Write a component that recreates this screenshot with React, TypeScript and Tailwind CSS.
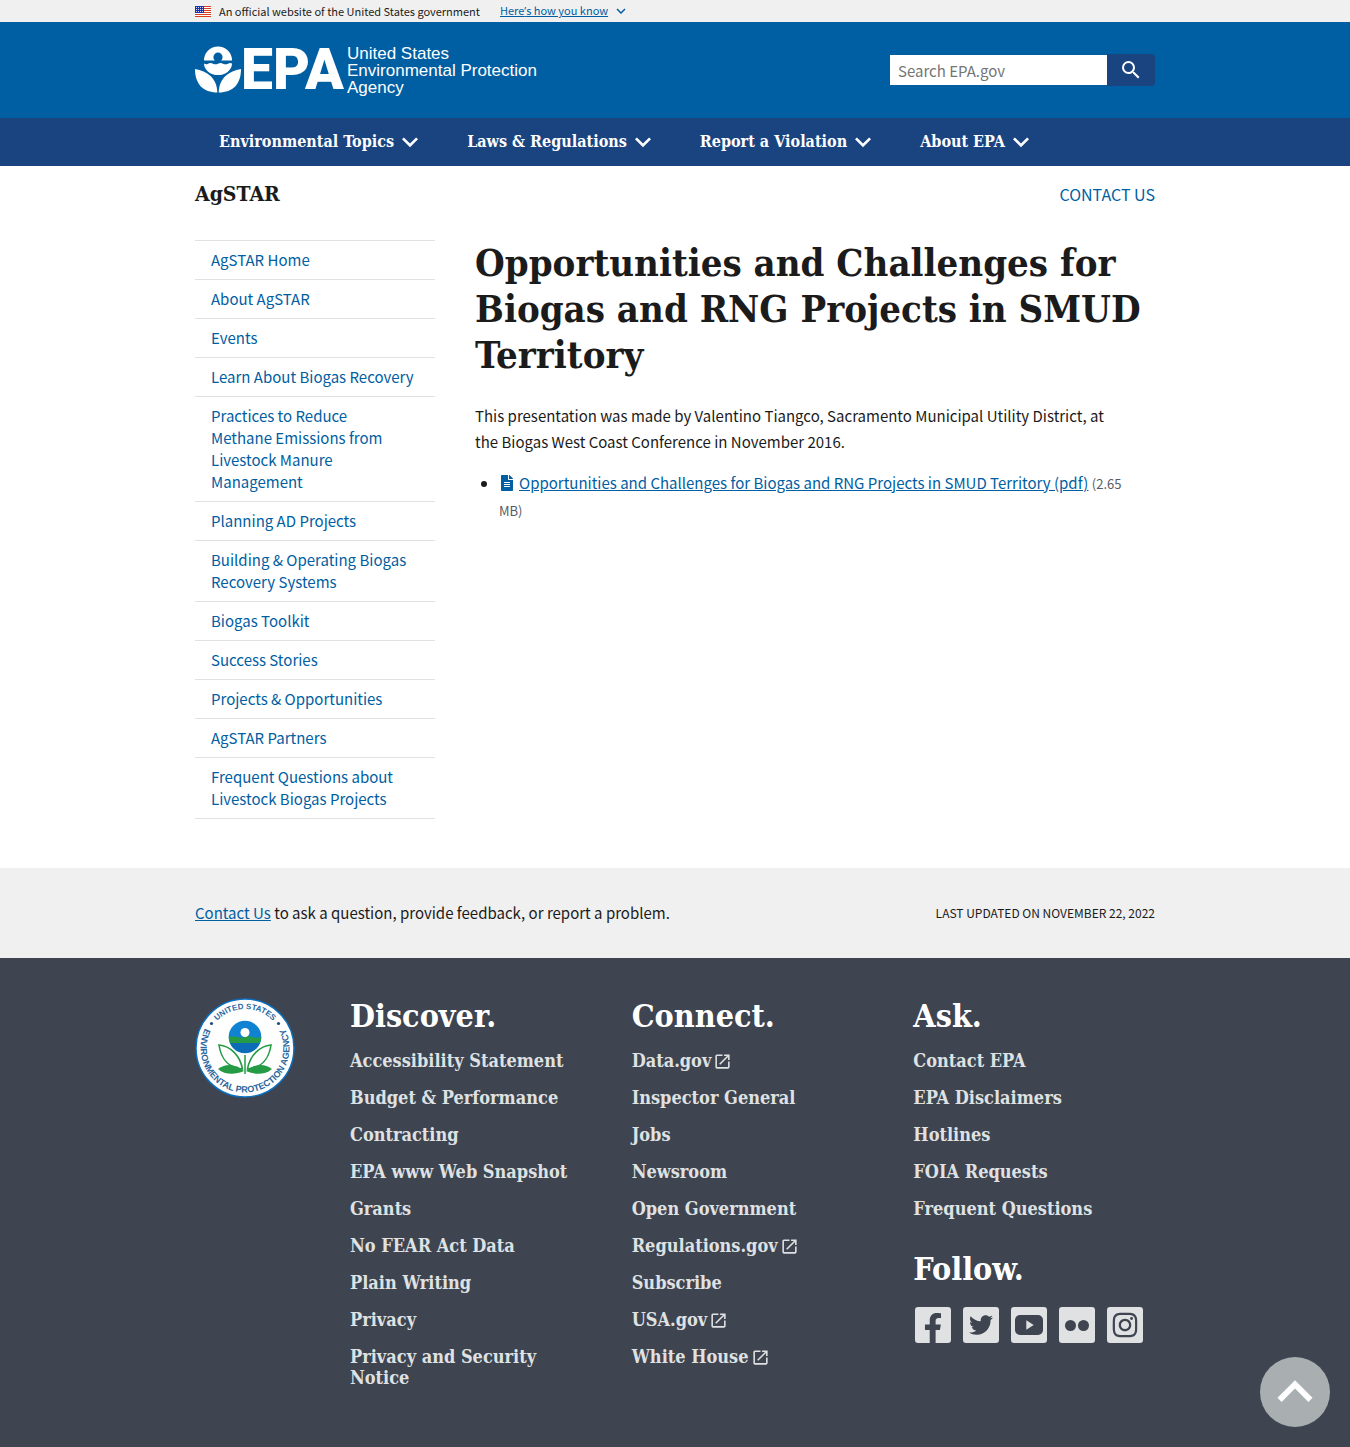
import type { ReactNode } from "react";
import { MdExpandLess, MdExpandMore, MdLaunch, MdPlayArrow, MdSearch } from "react-icons/md";
import { FaFacebookF, FaFileAlt, FaInstagram, FaTwitter } from "react-icons/fa";

const topics = ["Environmental Topics", "Laws & Regulations", "Report a Violation", "About EPA"];

const sideLinks = [
  "AgSTAR Home",
  "About AgSTAR",
  "Events",
  "Learn About Biogas Recovery",
  "Practices to Reduce Methane\u00a0Emissions from Livestock Manure Management",
  "Planning AD Projects",
  "Building & Operating Biogas Recovery Systems",
  "Biogas Toolkit",
  "Success Stories",
  "Projects & Opportunities",
  "AgSTAR Partners",
  "Frequent Questions about Livestock Biogas Projects",
];

type FooterLink = { label: string; external?: boolean };

const discover: FooterLink[] = [
  { label: "Accessibility Statement" },
  { label: "Budget & Performance" },
  { label: "Contracting" },
  { label: "EPA www Web Snapshot" },
  { label: "Grants" },
  { label: "No FEAR Act Data" },
  { label: "Plain Writing" },
  { label: "Privacy" },
  { label: "Privacy and Security Notice" },
];

const connect: FooterLink[] = [
  { label: "Data.gov", external: true },
  { label: "Inspector General" },
  { label: "Jobs" },
  { label: "Newsroom" },
  { label: "Open Government" },
  { label: "Regulations.gov", external: true },
  { label: "Subscribe" },
  { label: "USA.gov", external: true },
  { label: "White House", external: true },
];

const ask: FooterLink[] = [
  { label: "Contact EPA" },
  { label: "EPA Disclaimers" },
  { label: "Hotlines" },
  { label: "FOIA Requests" },
  { label: "Frequent Questions" },
];

function Container({ children, className = "" }: { children: ReactNode; className?: string }) {
  return <div className={`mx-auto w-full max-w-[960px] ${className}`}>{children}</div>;
}

function Flag() {
  return (
    <svg viewBox="0 0 16 11" className="h-[11px] w-4" aria-hidden="true">
      <rect width="16" height="11" fill="#fff" />
      {[0, 2, 4, 6, 8, 10].map((y) => (
        <rect key={y} y={y} width="16" height="1" fill="#db3e1f" />
      ))}
      <rect width="9" height="7" fill="#1e33b1" />
      {[1, 3, 5].map((y) =>
        [1, 3, 5, 7].map((x) => <rect key={`${x}-${y}`} x={x} y={y} width="1" height="1" fill="#fff" opacity="0.8" />),
      )}
    </svg>
  );
}

function Flower() {
  return (
    <svg viewBox="0 0 46 48" className="h-12 w-[46px]" aria-hidden="true" fill="#fff">
      <path d="M9 14.500A14 14 0 0 1 37 14.500H26.200A4.600 4.600 0 1 0 19.800 14.500Z" />
      <path d="M9 17.500Q11 18.800 13 17.700Q15.500 16.500 18 17.700Q20.500 18.900 23 17.700Q25.500 16.500 28 17.700Q30.500 18.900 33 17.700Q35 16.600 37 17.500A14 11.500 0 0 1 9 17.500Z" />
      <path d="M0 23C12 25 22 32 22.300 46.500C8 46.500 0 38 0 23Z" />
      <path d="M46 23C34 25 24 32 23.700 46.500C38 46.500 46 38 46 23Z" />
    </svg>
  );
}

function Seal() {
  return (
    <svg viewBox="0 0 100 100" className="size-[100px]" role="img" aria-label="EPA seal">
      <defs>
        <path id="seal-top" d="M11 50A39 39 0 0 1 89 50" />
        <path id="seal-bottom" d="M14.500 23.200A44.500 44.500 0 1 0 85.500 23.200" />
      </defs>
      <circle cx="50" cy="50" r="49" fill="#fff" stroke="#0a6ebd" strokeWidth="1.500" />
      <g fontFamily="Liberation Sans, Arial, sans-serif" fontWeight="700" fill="#2a679f" textAnchor="middle">
        <text fontSize="8">
          <textPath href="#seal-top" startOffset="50%">UNITED STATES</textPath>
        </text>
        <text fontSize="9">
          <textPath href="#seal-bottom" startOffset="50%">ENVIRONMENTAL PROTECTION AGENCY</textPath>
        </text>
      </g>
      <circle cx="16.500" cy="25.500" r="1.600" fill="#1c4f80" />
      <circle cx="83.500" cy="25.500" r="1.600" fill="#1c4f80" />
      <circle cx="50" cy="39" r="16.300" fill="#0f82d1" />
      <path d="M33.700 39Q38 37.500 42 39T50 39T58 39T66.300 39A16.300 16.300 0 0 1 65 45H35A16.300 16.300 0 0 1 33.700 39Z" fill="#259b45" />
      <path d="M35 45H65A16.300 16.300 0 0 1 35 45Z" fill="#0b6cb5" />
      <circle cx="50" cy="34.500" r="4.500" fill="#fff" />
      <path d="M24 47C35 48 45 57 47.500 71C34 70 26 61 24 47Z" fill="#fff" stroke="#259b45" strokeWidth="1.600" />
      <path d="M76 47C65 48 55 57 52.500 71C66 70 74 61 76 47Z" fill="#fff" stroke="#259b45" strokeWidth="1.600" />
      <path d="M23 71C31 65 41 66 49 73C40 77 30 77 23 71Z" fill="#259b45" />
      <path d="M77 71C69 65 59 66 51 73C60 77 70 77 77 71Z" fill="#259b45" />
      <path d="M50 57V76" stroke="#259b45" strokeWidth="1.500" />
    </svg>
  );
}

function FooterHeading({ children }: { children: ReactNode }) {
  return <h2 className="text-[32px] leading-9 font-bold text-white">{children}</h2>;
}

function FooterList({ links }: { links: FooterLink[] }) {
  return (
    <ul className="mt-4 flex flex-col gap-4 text-lg leading-[21px] font-bold text-[#dfe1e2]">
      {links.map(({ label, external }) => (
        <li key={label}>
          <a href="#" className="hover:underline">
            {label}
            {external && <MdLaunch className="ml-0.5 inline size-[19px] align-text-bottom" />}
          </a>
        </li>
      ))}
    </ul>
  );
}

function SocialTile({ label, children, className = "items-center" }: { label: string; children: ReactNode; className?: string }) {
  return (
    <a
      href="#"
      aria-label={label}
      className={`flex size-9 justify-center overflow-hidden rounded-[3px] bg-[#dfe1e2] text-[#3e4450] ${className}`}
    >
      {children}
    </a>
  );
}

export default function App() {
  return (
    <div className="flex min-h-screen flex-col bg-white font-['Noto_Sans_CJK_SC',sans-serif] text-[15px] text-[#1b1b1b]">
      <section className="bg-[#f0f0f0]" aria-label="Official government website">
        <Container className="flex h-[22px] items-center text-[11px]">
          <Flag />
          <p className="ml-2">An official website of the United States government</p>
          <button type="button" className="ml-5 flex items-center text-[#005ea2]">
            <span className="underline">
              Here<span className="font-['Open_Sans',sans-serif]">’</span>s how you know
            </span>
            <MdExpandMore className="ml-1 size-[18px]" />
          </button>
        </Container>
      </section>

      <header>
        <div className="bg-[#005ea2]">
          <Container className="flex h-24 items-center justify-between">
            <a href="#" className="flex items-center text-white" aria-label="EPA home">
              <Flower />
              <span className="w-[106px] font-['Roboto',sans-serif] text-[57px] leading-12 font-black">EPA</span>
              <span className="font-['Liberation_Sans',sans-serif] text-[17px] leading-[17px]">
                United States
                <br />
                Environmental Protection
                <br />
                Agency
              </span>
            </a>
            <form role="search" className="flex items-center" onSubmit={(e) => e.preventDefault()}>
              <input
                type="search"
                aria-label="Search"
                placeholder="Search EPA.gov"
                className="h-[30px] w-[217px] bg-white px-2 text-[15px] placeholder:text-[#757575]"
              />
              <button
                type="submit"
                aria-label="Search"
                className="flex h-8 w-12 items-center justify-center rounded-r bg-[#1a4480] text-white"
              >
                <MdSearch className="size-6" />
              </button>
            </form>
          </Container>
        </div>
        <nav className="bg-[#1a4480]" aria-label="Primary">
          <Container className="flex h-12 items-center gap-[41px] px-6 font-['DejaVu_Serif_Condensed','DejaVu_Serif',serif] text-white">
            {topics.map((topic) => (
              <button key={topic} type="button" className="flex items-center text-base font-bold whitespace-nowrap">
                {topic}
                <MdExpandMore className="size-8" />
              </button>
            ))}
          </Container>
        </nav>
      </header>

      <Container className="flex items-center justify-between pt-3">
        <h2 className="font-['DejaVu_Serif_Condensed','DejaVu_Serif',serif] text-[21px] leading-8 font-bold">AgSTAR</h2>
        <a href="#" className="text-base text-[#005ea2] hover:underline">
          CONTACT US
        </a>
      </Container>

      <Container className="mt-[30px] flex gap-10 pb-[49px]">
        <nav className="w-60 shrink-0" aria-label="Side navigation">
          <ul className="border-b border-[#dfe1e2]">
            {sideLinks.map((link) => (
              <li key={link} className="border-t border-[#dfe1e2] px-4 py-2 leading-[22px]">
                <a href="#" className="block text-[#005ea2] hover:underline">
                  {link}
                </a>
              </li>
            ))}
          </ul>
        </nav>
        <main className="min-w-0 flex-1">
          <h1 className="font-['DejaVu_Serif_Condensed','DejaVu_Serif',serif] text-[38px] leading-[46px] font-bold">
            Opportunities and Challenges for Biogas and RNG Projects in SMUD Territory
          </h1>
          <p className="mt-[25px] leading-[26px]">
            This presentation was made by Valentino Tiangco, Sacramento Municipal Utility District, at
            the&nbsp;Biogas West Coast Conference in November 2016.
          </p>
          <ul className="mt-[15px] list-disc pr-3 pl-6 leading-[26px]">
            <li>
              <FaFileAlt className="mr-1 inline size-4 align-[-2px] text-[#005ea2]" />
              <a href="#" className="text-[#005ea2] underline">
                Opportunities and Challenges for Biogas and RNG Projects in SMUD Territory (pdf)
              </a>{" "}
              <span className="text-[13px] text-[#565c65]">(2.65 MB)</span>
            </li>
          </ul>
        </main>
      </Container>

      <section className="bg-[#f0f0f0]" aria-label="Page feedback">
        <Container className="flex h-[90px] items-center justify-between">
          <p>
            <a href="#" className="text-[#005ea2] underline">
              Contact Us
            </a>{" "}
            to ask a question, provide feedback, or report a problem.
          </p>
          <p className="text-xs">LAST UPDATED ON NOVEMBER 22, 2022</p>
        </Container>
      </section>

      <footer className="flex-1 bg-[#3e4450] pt-10 pb-14 font-['DejaVu_Serif_Condensed','DejaVu_Serif',serif]">
        <Container className="flex gap-10">
          <div className="w-[115px] shrink-0">
            <Seal />
          </div>
          <div className="grid flex-1 grid-cols-3 gap-10">
            <div>
              <FooterHeading>Discover.</FooterHeading>
              <FooterList links={discover} />
            </div>
            <div>
              <FooterHeading>Connect.</FooterHeading>
              <FooterList links={connect} />
            </div>
            <div>
              <FooterHeading>Ask.</FooterHeading>
              <FooterList links={ask} />
              <div className="mt-8">
                <FooterHeading>Follow.</FooterHeading>
              </div>
              <div className="mt-5 ml-0.5 flex gap-3">
                <SocialTile label="Facebook" className="items-end">
                  <FaFacebookF className="h-[30px] w-5" />
                </SocialTile>
                <SocialTile label="Twitter">
                  <FaTwitter className="size-6" />
                </SocialTile>
                <SocialTile label="YouTube">
                  <span className="flex h-5 w-7 items-center justify-center rounded-[5px] bg-[#3e4450] text-[#dfe1e2]">
                    <MdPlayArrow className="size-4" />
                  </span>
                </SocialTile>
                <SocialTile label="Flickr">
                  <span className="flex gap-0.5">
                    <span className="size-[11px] rounded-full bg-[#3e4450]" />
                    <span className="size-[11px] rounded-full bg-[#3e4450]" />
                  </span>
                </SocialTile>
                <SocialTile label="Instagram">
                  <FaInstagram className="size-7" />
                </SocialTile>
              </div>
            </div>
          </div>
        </Container>
      </footer>

      <button
        type="button"
        aria-label="Back to top"
        className="fixed right-5 bottom-5 flex size-[70px] items-center justify-center rounded-full bg-[#a9aeb1] text-white"
      >
        <MdExpandLess className="size-[70px]" />
      </button>
    </div>
  );
}
